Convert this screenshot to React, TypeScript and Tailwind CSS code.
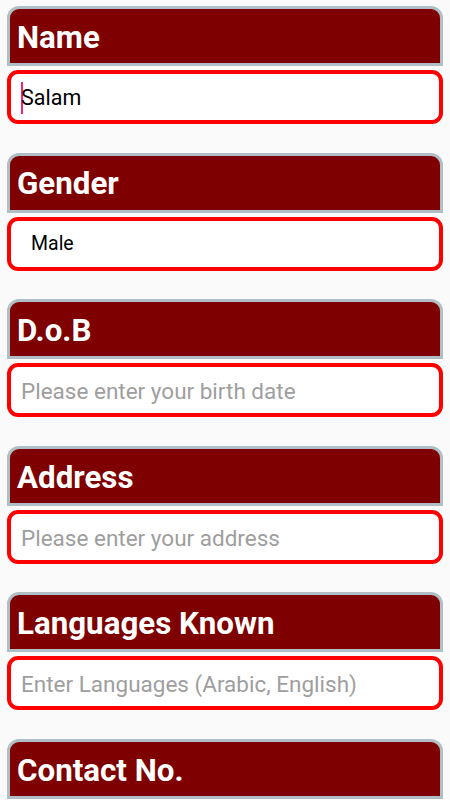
import React from "react";

type Field = {
  label: string;
  value?: string;
  placeholder?: string;
  kind?: "focus" | "spinner" | "input";
};

const fields: Field[] = [
  { label: "Name", value: "Salam", kind: "focus" },
  { label: "Gender", value: "Male", kind: "spinner" },
  { label: "D.o.B", placeholder: "Please enter your birth date" },
  { label: "Address", placeholder: "Please enter your address" },
  { label: "Languages Known", placeholder: "Enter Languages (Arabic, English)" },
  { label: "Contact No.", placeholder: "Please enter your contact number" },
];

function Section({ f }: { f: Field }) {
  return (
    <div className="flex flex-col gap-[4px] mb-[28.6px]">
      <div className="h-[60px] shrink-0 rounded-t-[12px] border-[3px] border-[#b0bec5] bg-[#7f0000] flex items-center pl-[7px] pt-[3px]">
        <span className="text-white font-bold text-[31.3px] leading-none">
          {f.label}
        </span>
      </div>
      <div className="h-[54px] shrink-0 rounded-[11px] border-[4px] border-[#ff0000] bg-white flex items-center">
        {f.kind === "focus" && (
          <div className="flex items-center pl-[10px] pt-[2px]">
            <span className="w-[2px] h-[32px] bg-[#ff1f6f] mr-[-2px]" />
            <span className="text-[21.5px] text-black leading-none">{f.value}</span>
          </div>
        )}
        {f.kind === "spinner" && (
          <span className="pl-[20px] text-[19.5px] text-black leading-none pt-[1px]">{f.value}</span>
        )}
        {!f.kind && (
          <span className="pl-[10px] text-[22.5px] text-[#9e9e9e] leading-none pt-[2px] whitespace-nowrap">
            {f.placeholder}
          </span>
        )}
      </div>
    </div>
  );
}

export default function App() {
  return (
    <div
      className="w-[450px] h-[800px] overflow-hidden bg-[#fafafa] px-[7px] pt-[6px]"
      style={{ fontFamily: "Roboto, 'Noto Sans', sans-serif" }}
    >
      {fields.map((f) => (
        <Section key={f.label} f={f} />
      ))}
    </div>
  );
}
